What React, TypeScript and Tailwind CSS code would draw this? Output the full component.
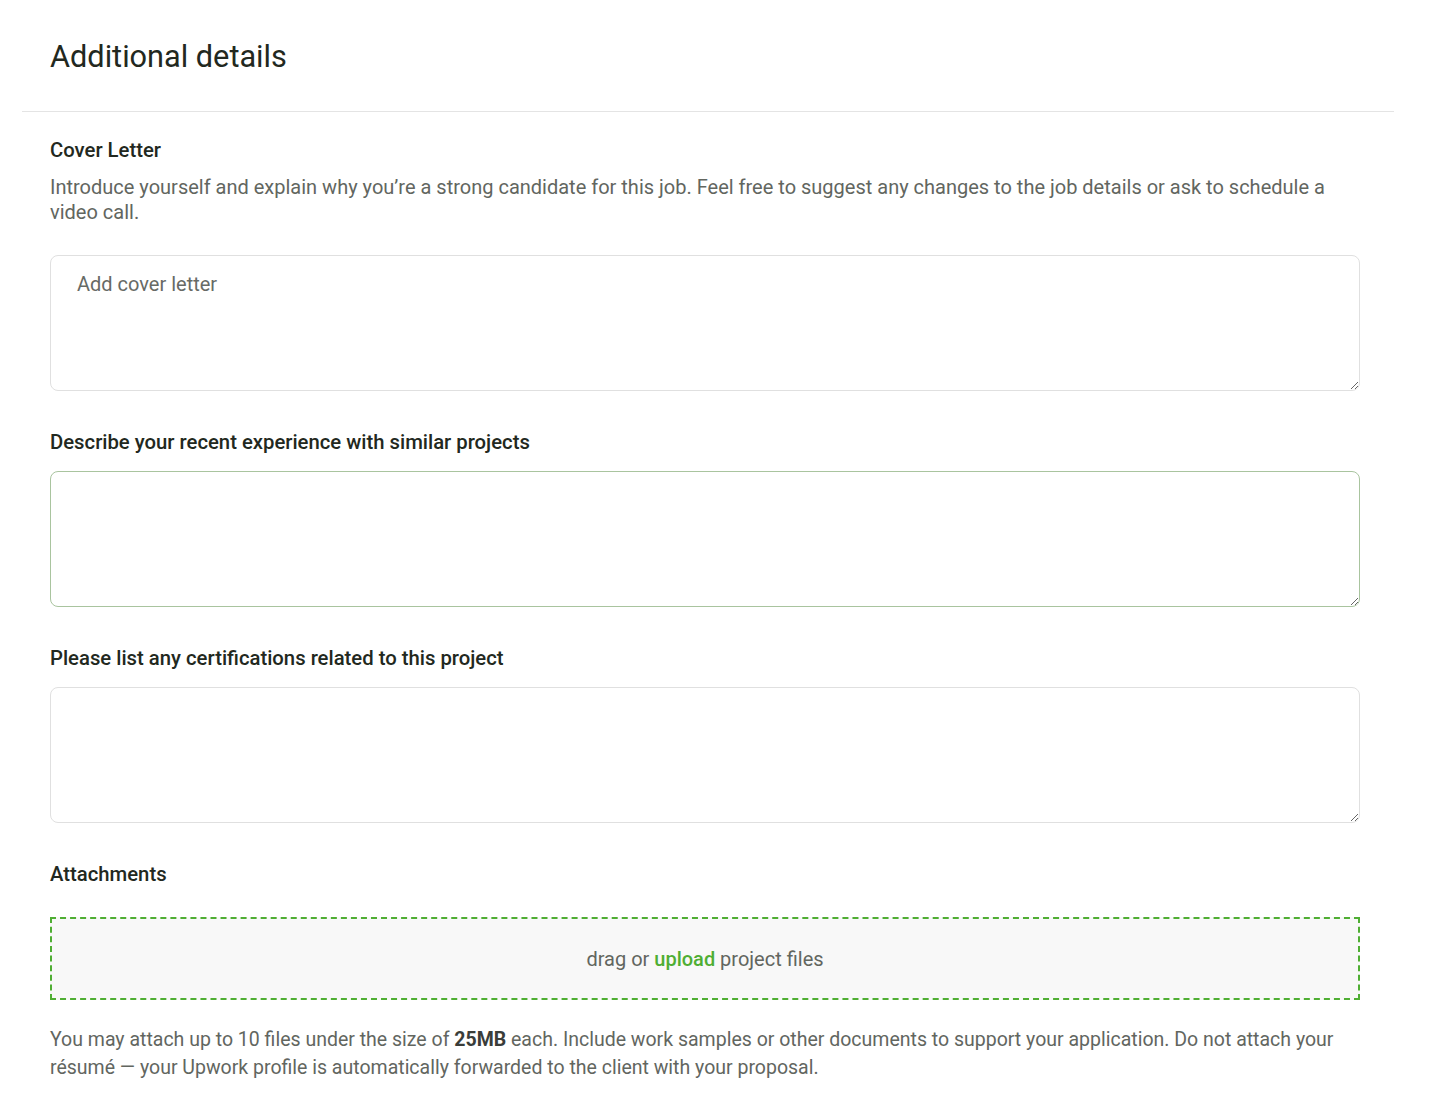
const font = { fontFamily: "Roboto, 'Liberation Sans', sans-serif" };

const Field = ({
  label,
  placeholder,
  focused,
}: {
  label: string;
  placeholder?: string;
  focused?: boolean;
}) => (
  <div className="mt-[39px]">
    <div className="text-[20.3px] leading-[24px] font-medium text-[#222820]">{label}</div>
    <textarea
      placeholder={placeholder}
      className={`mt-[17px] block w-full h-[136px] rounded-[8px] border bg-white px-[26px] pt-[16px] text-[20px] leading-[24px] text-[#222820] placeholder:text-[#676a66] outline-none ${
        focused ? "border-[#a9c49f]" : "border-[#e0e0e0]"
      }`}
    />
  </div>
);

export default function App() {
  return (
    <div className="bg-white min-h-[1110px] pl-[22px] pr-[40px]" style={font}>
      {/* Header */}
      <div className="px-[28px] pt-[39px] pb-[36px] border-b border-[#e4e4e4]">
        <h2 className="text-[30.7px] leading-[36px] font-normal text-[#222820]">Additional details</h2>
      </div>

      <div className="px-[28px] pt-[26px] w-[1366px]">
        {/* Cover letter */}
        <div className="text-[20.3px] leading-[24px] font-medium text-[#222820]">Cover Letter</div>
        <p className="mt-[13px] text-[20px] leading-[25px] text-[#62665f]">
          Introduce yourself and explain why you’re a strong candidate for this job. Feel free to suggest any changes
          to the job details or ask to schedule a video call.
        </p>
        <textarea
          placeholder="Add cover letter"
          className="mt-[30px] block w-full h-[136px] rounded-[8px] border border-[#e0e0e0] bg-white px-[26px] pt-[16px] text-[20px] leading-[24px] text-[#222820] placeholder:text-[#676a66] outline-none"
        />

        <Field label="Describe your recent experience with similar projects" focused />
        <Field label="Please list any certifications related to this project" />

        {/* Attachments */}
        <div className="mt-[39px] text-[20.3px] leading-[24px] font-medium text-[#222820]">Attachments</div>
        <div className="mt-[31px] h-[83px] flex items-center justify-center border-2 border-dashed border-[#4fae33] bg-[#f8f8f8] text-[20px] text-[#62665f]">
          <span>
            drag or <span className="text-[#4fae33] font-medium cursor-pointer">upload</span> project files
          </span>
        </div>
        <p className="mt-[26px] text-[19.5px] leading-[28px] text-[#62665f]">
          You may attach up to 10 files under the size of <strong className="font-bold text-[#3a3d39]">25MB</strong>{" "}
          each. Include work samples or other documents to support your application. Do not attach your résumé — your
          Upwork profile is automatically forwarded to the client with your proposal.
        </p>
      </div>
    </div>
  );
}
